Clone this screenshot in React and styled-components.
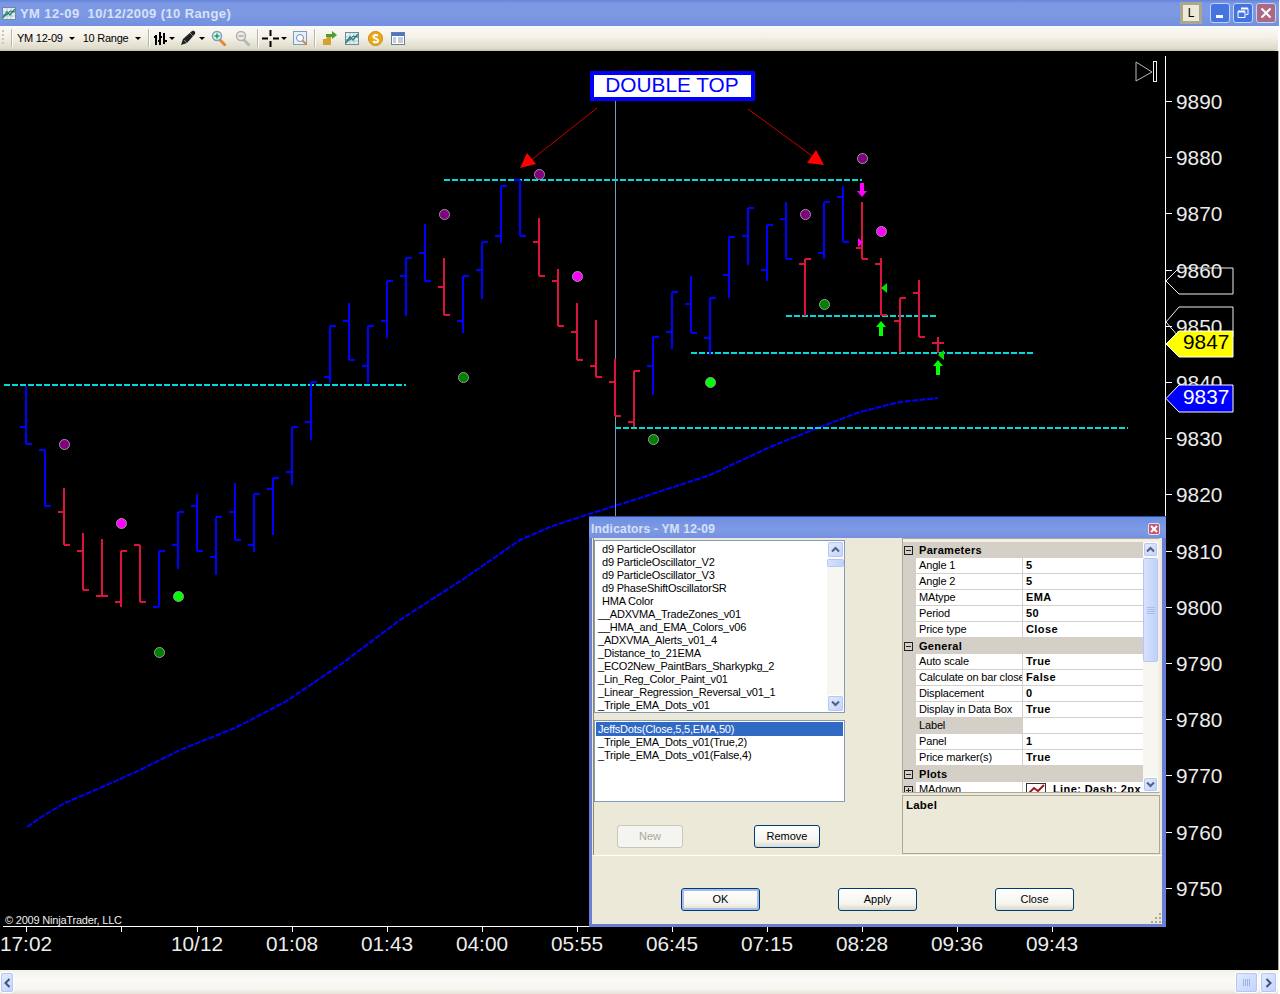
import React from 'react';
import styled, { createGlobalStyle } from 'styled-components';

const GlobalStyle = createGlobalStyle`
    html, body {
        margin: 0;
        padding: 0;
        background: #fff;
        overflow: hidden;
    }
    * { box-sizing: border-box; }
`

const UI_FONT = `"Liberation Sans", Arial, sans-serif`

const Window = styled.div`
    width: 1280px;
    height: 994px;
    display: flex;
    flex-direction: column;
    position: relative;
    font-family: ${UI_FONT};
    font-size: 11px;
    color: #000;
    background: #fff;
    overflow: hidden;
`
const TitleBar = styled.div`
    height: 26px;
    width: 1279px;
    display: flex;
    align-items: center;
    padding-left: 2px;
    background: linear-gradient(180deg, #6484dc 0, #7c98e2 12%, #7d99e3 55%, #7390e0 100%);
`
const TitleText = styled.div`
    flex: 1;
    margin-left: 4px;
    font-size: 13px;
    font-weight: bold;
    letter-spacing: 0.4px;
    white-space: pre;
    color: #d6e2f8;
`
const LockButton = styled.div`
    width: 22px;
    height: 22px;
    margin-right: 8px;
    display: flex;
    align-items: center;
    justify-content: center;
    font-size: 12px;
    background: #ece9d8;
    border: 3px solid #aaa690;
`
const CaptionButton = styled.div`
    width: 20px;
    height: 20px;
    margin-right: 3px;
    display: flex;
    align-items: center;
    justify-content: center;
    border: 1px solid #c3d2f6;
    border-radius: 3px;
    background: ${p => (p.$close ? '#aa6a84' : '#4474e0')};
`
const Toolbar = styled.div`
    height: 25px;
    width: 1278px;
    display: flex;
    align-items: center;
    padding-bottom: 1px;
    background: linear-gradient(180deg, #fbfaf6 0, #f3f1e8 45%, #dedbc9 90%, #c4c3a8 100%);
    border-bottom-right-radius: 3px;
`
const Grip = styled.div`
    width: 2px;
    height: 16px;
    margin-left: 2px;
    background: repeating-linear-gradient(180deg, #c9c7b8 0 2px, transparent 2px 4px);
`
const Separator = styled.div`
    width: 2px;
    height: 18px;
    margin-left: ${p => p.$gap}px;
    border-left: 1px solid #b9b6a6;
    border-right: 1px solid #fff;
`
const ToolLabel = styled.span`
    margin-left: ${p => p.$gap}px;
    white-space: nowrap;
    font-size: 11px;
    letter-spacing: -0.25px;
`
const Caret = styled.span`
    margin-left: ${p => p.$gap}px;
    width: 0;
    height: 0;
    border-left: 3px solid transparent;
    border-right: 3px solid transparent;
    border-top: 3px solid #000;
`
const ToolIcon = styled.svg`
    display: block;
    flex: none;
    margin-left: ${p => p.$gap}px;
`
const ChartPane = styled.div`
    height: 919px;
    display: flex;
    background: #000;
    border-right: 1px solid #aca899;
    width: 1279px;
`
const ChartSvg = styled.svg`
    display: block;
    flex: none;
`
const AxisText = styled.text`
    font-family: ${UI_FONT};
    font-size: 20.8px;
    fill: ${p => p.$fill || '#ececec'};
`
const SmallText = styled.text`
    font-family: ${UI_FONT};
    font-size: 11px;
    letter-spacing: -0.2px;
    fill: #eee;
`
const BottomBar = styled.div`
    height: 24px;
    width: 1278px;
    padding: 2px 1px 1px 0;
    display: flex;
    justify-content: space-between;
    background: linear-gradient(180deg, #f3f1ea 0, #fbfaf7 40%, #f6f5ef 80%, #e4e2d8 100%);
`
const HBarGroup = styled.div`
    display: flex;
    gap: 2px;
`
const XpButton = styled.div`
    width: ${p => p.$w}px;
    height: ${p => p.$h}px;
    flex: none;
    display: flex;
    align-items: center;
    justify-content: center;
    background: linear-gradient(135deg, #e3ebfe, #c2d2fc);
    border: 1px solid #fff;
    outline: 1px solid #b5c7f2;
    outline-offset: -2px;
    border-radius: 3px;
`

/* indicators dialog */
const Dialog = styled.div`
    position: absolute;
    left: 589px;
    top: 516px;
    width: 577px;
    height: 411px;
    display: flex;
    flex-direction: column;
    background: #6a7ed8;
    padding: 0 4px 3px 3px;
    border-top: 1px solid #2f4fa8;
`
const DialogTitle = styled.div`
    height: 21px;
    display: flex;
    align-items: center;
    justify-content: space-between;
    padding: 2px 3px 0 2px;
    margin: 0 -4px 0 -3px;
    background: linear-gradient(180deg, #6e8fe2 0, #7e9ae4 60%, #7590e0 100%);
    font-weight: bold;
    font-size: 12px;
    letter-spacing: 0.2px;
    color: #d5e1f8;
`
const DialogClose = styled.div`
    width: 12px;
    height: 12px;
    margin-right: 3px;
    display: flex;
    align-items: center;
    justify-content: center;
    background: #c05a70;
    border: 1px solid #e8e0f0;
    border-radius: 2px;
`
const DialogBody = styled.div`
    flex: 1;
    display: flex;
    flex-direction: column;
    background: #ece9d8;
`
const TopSection = styled.div`
    height: 318px;
    display: flex;
    border-bottom: 1px solid #fff;
`
const LeftPane = styled.div`
    width: 309px;
    margin-left: 1px;
    padding-top: 2px;
    display: flex;
    flex-direction: column;
    border-left: 1px solid #8d8a78;
`
const ListBox = styled.div`
    width: 251px;
    height: ${p => p.$h}px;
    margin-bottom: ${p => p.$mb}px;
    display: flex;
    background: #fff;
    border: 1px solid #7f9db9;
`
const ListRows = styled.div`
    flex: 1;
    padding: ${p => (p.$pad ? '1px' : '2px 0 0')};
    overflow: hidden;
`
const ListRow = styled.div`
    height: ${p => (p.$selected ? 14 : 13)}px;
    line-height: ${p => (p.$selected ? 15 : 13)}px;
    padding-left: ${p => p.$indent}px;
    white-space: nowrap;
    letter-spacing: -0.2px;
    background: ${p => (p.$selected ? '#316ac5' : 'transparent')};
    color: ${p => (p.$selected ? '#fff' : '#000')};
`
const VScroll = styled.div`
    width: ${p => p.$w}px;
    flex: none;
    display: flex;
    flex-direction: column;
    justify-content: space-between;
    background: #f7f6f1;
`
const ScrollStart = styled.div`
    display: flex;
    flex-direction: column;
    gap: 1px;
`
const ScrollThumb = styled.div`
    height: ${p => p.$h}px;
    background: linear-gradient(90deg, #d6e2fc, #c0d2fa);
    border: 1px solid #fff;
    outline: 1px solid #b5c7f2;
    outline-offset: -1px;
    border-radius: 2px;
    display: flex;
    align-items: center;
    justify-content: center;
`
const ButtonRow = styled.div`
    display: flex;
    gap: 71px;
    padding-left: 23px;
`
const DialogButton = styled.div`
    width: ${p => p.$w || 66}px;
    height: 23px;
    padding-bottom: 2px;
    display: flex;
    align-items: center;
    justify-content: center;
    border-radius: 3px;
    border: 1px solid ${p => (p.$disabled ? '#c9c7ba' : '#003c74')};
    color: ${p => (p.$disabled ? '#aca899' : '#000')};
    background: ${p => (p.$disabled ? '#f4f4f0' : 'linear-gradient(180deg, #fff 0, #f5f4ee 70%, #dcd8cc 100%)')};
    box-shadow: ${p => (p.$default ? 'inset 0 0 0 2px #a4bdec' : 'none')};
`
const RightPane = styled.div`
    width: 258px;
    display: flex;
    flex-direction: column;
`
const PropertyGrid = styled.div`
    height: 255px;
    display: flex;
    padding-top: 3px;
    border-top: 1px solid #aca899;
    border-left: 1px solid #aca899;
    border-right: 1px solid #f1efe4;
    border-bottom: 1px solid #aca899;
    background: #f2f0e6;
    overflow: hidden;
`
const PropertyRows = styled.div`
    width: 240px;
    flex: none;
    overflow: hidden;
`
const SectionHead = styled.div`
    height: 16px;
    display: flex;
    align-items: center;
    gap: 6px;
    padding-left: 1px;
    font-weight: bold;
    letter-spacing: 0.3px;
    background: #d4d0c8;
`
const ExpandBox = styled.span`
    width: 9px;
    height: 9px;
    flex: none;
    position: relative;
    border: 1px solid #222;
    &::before {
        content: '';
        position: absolute;
        left: 1px;
        right: 1px;
        top: 3px;
        height: 1px;
        background: #222;
    }
    &::after {
        content: '';
        display: ${p => (p.$plus ? 'block' : 'none')};
        position: absolute;
        top: 1px;
        bottom: 1px;
        left: 3px;
        width: 1px;
        background: #222;
    }
`
const PropRow = styled.div`
    height: 16px;
    display: grid;
    grid-template-columns: 13px 107px 1fr;
    background: #fff;
`
const Gutter = styled.div`
    background: #d4d0c8;
    display: flex;
    align-items: center;
    padding-left: 1px;
`
const PropName = styled.div`
    padding-left: 3px;
    line-height: 15px;
    white-space: nowrap;
    overflow: hidden;
    letter-spacing: -0.15px;
    border-right: 1px solid #d4d0c8;
    border-bottom: 1px solid #d4d0c8;
    background: ${p => (p.$active ? '#d4d0c8' : '#fff')};
`
const PropValue = styled.div`
    padding-left: 3px;
    line-height: 15px;
    font-weight: bold;
    letter-spacing: 0.4px;
    white-space: nowrap;
    overflow: hidden;
    display: flex;
    align-items: center;
    gap: 7px;
    border-bottom: 1px solid #d4d0c8;
`
const HelpPanel = styled.div`
    margin-top: 2px;
    height: 59px;
    padding: 3px 3px;
    font-weight: bold;
    font-size: 11.5px;
    letter-spacing: 0.2px;
    border: 1px solid #aca899;
`
const BottomSection = styled.div`
    flex: 1;
    position: relative;
    display: flex;
    gap: 78px;
    padding: 32px 0 0 89px;
`
const ResizeGrip = styled.svg`
    position: absolute;
    right: 0;
    bottom: 0;
`

const B = '#0000ff'
const R = '#dc143c'

// x, high, low, open, close, colour (all in page pixels)
const BARS = [
    [26, 386, 444, 427, 444, B], [45, 450, 506, 450, 506, B], [64, 488, 545, 512, 545, R],
    [83, 533, 590, 551, 590, R], [102, 539, 596, 596, 596, R], [121, 551, 607, 602, 551, R],
    [140, 545, 602, 545, 602, R], [159, 551, 607, 607, 551, B], [178, 512, 569, 545, 512, B],
    [197, 494, 551, 506, 551, B], [216, 517, 575, 557, 517, B], [235, 483, 540, 512, 540, B],
    [254, 494, 552, 545, 494, B], [273, 478, 535, 489, 478, B], [292, 427, 485, 472, 427, B],
    [311, 382, 440, 422, 382, B], [330, 326, 383, 377, 326, B], [349, 303, 360, 321, 360, B],
    [368, 326, 383, 366, 326, B], [387, 281, 338, 321, 281, B], [406, 258, 316, 276, 258, B],
    [425, 224, 281, 253, 281, B], [444, 258, 315, 287, 315, R], [463, 276, 333, 321, 276, B],
    [482, 242, 299, 270, 242, B], [501, 186, 243, 236, 186, B], [520, 180, 236, 180, 236, B],
    [539, 218, 276, 242, 276, R], [558, 269, 326, 281, 326, R], [577, 303, 360, 332, 360, R],
    [596, 320, 377, 366, 377, R], [615, 359, 416, 382, 416, R], [634, 371, 427, 422, 371, R],
    [653, 337, 395, 366, 337, B], [672, 292, 349, 332, 292, B], [691, 276, 333, 304, 333, B],
    [710, 298, 355, 338, 298, B], [729, 237, 298, 275, 237, B], [748, 208, 265, 236, 208, B],
    [767, 225, 281, 270, 225, B], [786, 202, 259, 219, 259, B], [805, 259, 316, 264, 259, R],
    [824, 202, 259, 253, 202, B], [843, 186, 242, 197, 242, B], [862, 202, 259, 248, 259, R],
    [881, 258, 315, 264, 315, R], [900, 298, 353, 321, 298, R], [919, 280, 337, 293, 337, R],
    [938, 337, 353, 343, 343, R],
]

const DOTS = [
    [64, 444, '#800080'], [444, 214, '#800080'], [539, 174, '#800080'], [805, 214, '#800080'], [862, 158, '#800080'],
    [121, 523, '#ff00ff'], [577, 276, '#ff00ff'], [881, 231, '#ff00ff'],
    [178, 596, '#00ff00'], [710, 382, '#00ff00'],
    [159, 652, '#008000'], [463, 377, '#008000'], [653, 439, '#008000'], [824, 304, '#008000'],
]

const LEVELS = [[4, 406, 385], [444, 862, 180], [786, 937, 316], [691, 1034, 353], [615, 1128, 428]]

const EMA = '27,827 46,814 65,803 100,788 140,770 180,750 235,728 285,702 340,665 400,620 465,578 520,540 550,527 580,517 640,498 710,475 770,447 820,427 860,412 900,402 938,398'

const PRICES = [
    [9890, 101], [9880, 157], [9870, 213], [9860, 270], [9850, 326], [9840, 382], [9830, 438], [9820, 494],
    [9810, 551], [9800, 607], [9790, 663], [9780, 719], [9770, 775], [9760, 832], [9750, 888],
]

const TIMES = [
    [26, '17:02'], [121, ''], [197, '10/12'], [292, '01:08'], [387, '01:43'], [482, '04:00'], [577, '05:55'],
    [672, '06:45'], [767, '07:15'], [862, '08:28'], [957, '09:36'], [1052, '09:43'],
]

const tag = (top, bottom) => {
    const mid = (top + bottom) / 2
    return `M1233 ${top} H1179 L1166 ${mid} L1179 ${bottom} H1233 Z`
}

const Bar = ({ bar }) => {
    const [x, high, low, open, close, color] = bar
    return (
        <g stroke={color} strokeWidth="2" shapeRendering="crispEdges">
            <line x1={x} x2={x} y1={high} y2={low} />
            <line x1={x - 6} x2={x} y1={open} y2={open} />
            <line x1={x} x2={x + 6} y1={close} y2={close} />
        </g>
    )
}

const Chart = () => (
    <ChartSvg width="1278" height="919" viewBox="0 51 1278 919">
        <line x1="615.5" x2="615.5" y1="100" y2="520" stroke="#7d97b8" shapeRendering="crispEdges" />
        <polyline points={EMA} fill="none" stroke="#0000ff" strokeWidth="2" strokeDasharray="6 1.5" />
        {LEVELS.map(([x1, x2, y]) => (
            <line key={y} x1={x1} x2={x2} y1={y} y2={y} stroke="#00dcdc" strokeWidth="2" strokeDasharray="6 2" shapeRendering="crispEdges" />
        ))}
        {BARS.map(b => <Bar key={b[0]} bar={b} />)}
        {DOTS.map(([x, y, c]) => <circle key={`${x}-${y}`} cx={x + 0.5} cy={y + 0.5} r="5" fill={c} stroke="#999" />)}

        <path d="M860 183h4v8h3l-5 6-5-6h3z" fill="#ff00ff" />
        <path d="M879 336v-9h-3l5-6 5 6h-3v9z" fill="#00ff00" />
        <path d="M936 375v-9h-3l5-6 5 6h-3v9z" fill="#00ff00" />
        <path d="M858 238l5 4.500-5 4.500z" fill="#ff00ff" />
        <path d="M887 283v10l-6-5z" fill="#00e000" />
        <path d="M944 350v10l-6-5z" fill="#00e000" />

        <line x1="597" y1="108" x2="530" y2="161" stroke="#c80000" />
        <path d="M520 168L527 153L536 164z" fill="#ff0000" />
        <line x1="748" y1="109" x2="815" y2="158" stroke="#c80000" />
        <path d="M824 165L807 163L816 150z" fill="#ff0000" />
        <rect x="592" y="73" width="161" height="26" fill="#fff" stroke="#0000ff" strokeWidth="4" />
        <AxisText x="672" y="92" textAnchor="middle" $fill="#0000ff">DOUBLE TOP</AxisText>

        <path d="M1136 62L1152 72L1136 81z" fill="none" stroke="#bbb" />
        <rect x="1153.500" y="61.500" width="3" height="20" fill="none" stroke="#eee" />

        <line x1="1165.500" x2="1165.500" y1="56" y2="926" stroke="#fff" shapeRendering="crispEdges" />
        <line x1="3" x2="1165" y1="926.500" y2="926.500" stroke="#fff" shapeRendering="crispEdges" />
        {PRICES.map(([p, y]) => (
            <g key={p}>
                <line x1="1166" x2="1172" y1={y + 0.5} y2={y + 0.5} stroke="#fff" shapeRendering="crispEdges" />
                <AxisText x="1176" y={y + 7.5}>{p}</AxisText>
            </g>
        ))}
        {TIMES.map(([x, t]) => (
            <g key={x}>
                <line x1={x + 0.5} x2={x + 0.5} y1="926" y2="932" stroke="#fff" shapeRendering="crispEdges" />
                <AxisText x={x} y="951" textAnchor="middle">{t}</AxisText>
            </g>
        ))}
        <SmallText x="5" y="924">© 2009 NinjaTrader, LLC</SmallText>

        <path d={tag(268, 294)} fill="none" stroke="#eee" />
        <path d={tag(307, 337)} fill="none" stroke="#eee" />
        <path d={tag(331, 357)} fill="#ffff00" stroke="#fff" />
        <AxisText x="1183" y="349" $fill="#000">9847</AxisText>
        <path d={tag(385, 412)} fill="#0000ff" stroke="#fff" />
        <AxisText x="1183" y="404" $fill="#fff">9837</AxisText>
    </ChartSvg>
)

const ChartGlyph = ({ gap }) => (
    <ToolIcon $gap={gap} width="14" height="13" viewBox="0 0 14 13">
        <rect x="0.500" y="0.500" width="13" height="12" fill="#e8eef6" stroke="#6a8aa8" />
        <path d="M1 5h12M1 9h12M5 1v11M9 1v11" stroke="#b8c8d8" />
        <path d="M1 11L5 5l3 3 5-6" fill="none" stroke="#1c9c3c" strokeWidth="1.500" />
        <path d="M1 8L5 8l3-4 5 1" fill="none" stroke="#2c5cc8" />
    </ToolIcon>
)

const ZoomGlyph = ({ gap, muted, plus }) => (
    <ToolIcon $gap={gap} width="15" height="16" viewBox="0 0 15 16">
        <path d="M9 10l5 5" stroke={muted ? '#b8b8b4' : '#e08838'} strokeWidth="3" strokeLinecap="round" />
        <circle cx="6" cy="6" r="4.500" fill={muted ? '#ecece8' : '#dceef8'} stroke={muted ? '#b0b0ac' : '#7aa0b8'} strokeWidth="1.500" />
        <path d="M3.500 6h5" stroke={muted ? '#a8a8a4' : '#20a040'} strokeWidth="1.500" />
        {plus && <path d="M6 3.500v5" stroke="#20a040" strokeWidth="1.500" />}
    </ToolIcon>
)

const Chevron = ({ down, dark }) => (
    <svg width="9" height="7" viewBox="0 0 9 7">
        <path d={down ? 'M1 1.500L4.500 5L8 1.500' : 'M1 5.500L4.500 2L8 5.500'} fill="none" stroke={dark || '#4d6185'} strokeWidth="2" />
    </svg>
)

const HChevron = ({ right }) => (
    <svg width="7" height="10" viewBox="0 0 7 10">
        <path d={right ? 'M1.500 1L5.500 5L1.500 9' : 'M5.500 1L1.500 5L5.500 9'} fill="none" stroke="#3f5278" strokeWidth="2" />
    </svg>
)

const ListScroll = ({ thumb, w }) => (
    <VScroll $w={w}>
        <ScrollStart>
            <XpButton $w={w} $h={w}><Chevron /></XpButton>
            <ScrollThumb $h={thumb}>
                {thumb > 40 && (
                    <svg width="8" height="7" viewBox="0 0 8 7">
                        <path d="M0 .5h8M0 2.500h8M0 4.500h8M0 6.500h8" stroke="#a8bcf0" />
                    </svg>
                )}
            </ScrollThumb>
        </ScrollStart>
        <XpButton $w={w} $h={w}><Chevron down /></XpButton>
    </VScroll>
)

const AVAILABLE = [
    ['d9 ParticleOscillator', 8], ['d9 ParticleOscillator_V2', 8], ['d9 ParticleOscillator_V3', 8],
    ['d9 PhaseShiftOscillatorSR', 8], ['HMA Color', 8], ['__ADXVMA_TradeZones_v01', 4],
    ['__HMA_and_EMA_Colors_v06', 4], ['_ADXVMA_Alerts_v01_4', 4], ['_Distance_to_21EMA', 4],
    ['_ECO2New_PaintBars_Sharkypkg_2', 4], ['_Lin_Reg_Color_Paint_v01', 4],
    ['_Linear_Regression_Reversal_v01_1', 4], ['_Triple_EMA_Dots_v01', 4],
]

const APPLIED = ['JeffsDots(Close,5,5,EMA,50)', '_Triple_EMA_Dots_v01(True,2)', '_Triple_EMA_Dots_v01(False,4)']

const SECTIONS = [
    ['Parameters', [['Angle 1', '5'], ['Angle 2', '5'], ['MAtype', 'EMA'], ['Period', '50'], ['Price type', 'Close']]],
    ['General', [
        ['Auto scale', 'True'], ['Calculate on bar close', 'False'], ['Displacement', '0'],
        ['Display in Data Box', 'True'], ['Label', ''], ['Panel', '1'], ['Price marker(s)', 'True'],
    ]],
]

const IndicatorsDialog = () => (
    <Dialog>
        <DialogTitle>
            Indicators - YM 12-09
            <DialogClose>
                <svg width="8" height="8" viewBox="0 0 8 8">
                    <path d="M1 1l6 6M7 1L1 7" stroke="#fff" strokeWidth="2" />
                </svg>
            </DialogClose>
        </DialogTitle>
        <DialogBody>
            <TopSection>
                <LeftPane>
                    <ListBox $h={173} $mb={7}>
                        <ListRows>
                            {AVAILABLE.map(([name, indent]) => (
                                <ListRow key={name} $indent={indent - 1}>{name}</ListRow>
                            ))}
                        </ListRows>
                        <ListScroll thumb={8} w={17} />
                    </ListBox>
                    <ListBox $h={82} $mb={23}>
                        <ListRows $pad>
                            {APPLIED.map((name, i) => (
                                <ListRow key={name} $indent={2} $selected={i === 0}>{name}</ListRow>
                            ))}
                        </ListRows>
                    </ListBox>
                    <ButtonRow>
                        <DialogButton $disabled>New</DialogButton>
                        <DialogButton>Remove</DialogButton>
                    </ButtonRow>
                </LeftPane>
                <RightPane>
                    <PropertyGrid>
                        <PropertyRows>
                            {SECTIONS.map(([title, rows]) => (
                                <div key={title}>
                                    <SectionHead><ExpandBox />{title}</SectionHead>
                                    {rows.map(([name, value]) => (
                                        <PropRow key={name}>
                                            <Gutter />
                                            <PropName $active={name === 'Label'}>{name}</PropName>
                                            <PropValue>{value}</PropValue>
                                        </PropRow>
                                    ))}
                                </div>
                            ))}
                            <SectionHead><ExpandBox />Plots</SectionHead>
                            <PropRow>
                                <Gutter><ExpandBox $plus /></Gutter>
                                <PropName>MAdown</PropName>
                                <PropValue>
                                    <svg width="20" height="14" viewBox="0 0 20 14">
                                        <rect x="0.500" y="0.500" width="19" height="13" fill="#fff" stroke="#333" />
                                        <path d="M2 11L8 5l4 3 6-6" fill="none" stroke="#a01820" strokeWidth="2" />
                                    </svg>
                                    Line; Dash; 2px
                                </PropValue>
                            </PropRow>
                        </PropertyRows>
                        <ListScroll thumb={104} w={15} />
                    </PropertyGrid>
                    <HelpPanel>Label</HelpPanel>
                </RightPane>
            </TopSection>
            <BottomSection>
                <DialogButton $w={79} $default>OK</DialogButton>
                <DialogButton $w={79}>Apply</DialogButton>
                <DialogButton $w={79}>Close</DialogButton>
                <ResizeGrip width="12" height="12" viewBox="0 0 12 12">
                    <path d="M9 1h2v2H9zM5 5h2v2H5zM9 5h2v2H9zM1 9h2v2H1zM5 9h2v2H5zM9 9h2v2H9z" fill="#aca899" />
                </ResizeGrip>
            </BottomSection>
        </DialogBody>
    </Dialog>
)

const App = () => (
    <Window>
        <GlobalStyle />
        <TitleBar>
            <ChartGlyph gap={0} />
            <TitleText>YM 12-09  10/12/2009 (10 Range)</TitleText>
            <LockButton>L</LockButton>
            <CaptionButton>
                <svg width="10" height="10" viewBox="0 0 10 10"><rect x="1" y="7" width="7" height="3" fill="#fff" /></svg>
            </CaptionButton>
            <CaptionButton>
                <svg width="12" height="12" viewBox="0 0 12 12">
                    <path d="M4 1.500h7v6H9M1 4.500h7v6H1z" fill="none" stroke="#fff" />
                    <path d="M4 1.500h7M1 4.500h7" stroke="#fff" strokeWidth="2" />
                </svg>
            </CaptionButton>
            <CaptionButton $close>
                <svg width="12" height="12" viewBox="0 0 12 12"><path d="M1.500 1.500l9 9M10.500 1.500l-9 9" stroke="#fff" strokeWidth="2" /></svg>
            </CaptionButton>
        </TitleBar>
        <Toolbar>
            <Grip />
            <Separator $gap={7} />
            <ToolLabel $gap={4}>YM 12-09</ToolLabel>
            <Caret $gap={6} />
            <ToolLabel $gap={8}>10 Range</ToolLabel>
            <Caret $gap={7} />
            <Separator $gap={7} />
            <ToolIcon $gap={4} width="13" height="15" viewBox="0 0 13 15">
                <path d="M2 4v10M6 1v13M10 2v11M0 6h2M6 10h-2M6 6h2M10 10h3" stroke="#000" strokeWidth="2" />
            </ToolIcon>
            <Caret $gap={2} />
            <ToolIcon $gap={5} width="17" height="16" viewBox="0 0 17 16">
                <path d="M1 15l2-6L12 1c2-1 4 1 3 3l-8 9z" fill="#222" />
                <path d="M4 10l3 3M10 3l3 3" stroke="#888" />
            </ToolIcon>
            <Caret $gap={2} />
            <ZoomGlyph gap={6} plus />
            <ZoomGlyph gap={9} muted />
            <Separator $gap={7} />
            <ToolIcon $gap={3} width="17" height="17" viewBox="0 0 17 17">
                <path d="M8.500 0v6M8.500 11v6M0 8.500h6M11 8.500h6" stroke="#000" strokeWidth="2" />
            </ToolIcon>
            <Caret $gap={2} />
            <ToolIcon $gap={6} width="15" height="15" viewBox="0 0 15 15">
                <rect x="0.500" y="0.500" width="13" height="13" fill="#e8f0fa" stroke="#7c9cc0" />
                <circle cx="7" cy="7" r="3.500" fill="#fff" stroke="#6890b8" />
                <path d="M9.500 9.500l4 4" stroke="#d88838" strokeWidth="2" />
            </ToolIcon>
            <Separator $gap={6} />
            <ToolIcon $gap={6} width="15" height="15" viewBox="0 0 15 15">
                <path d="M1 14V8h3l1-2h4v8z" fill="#d8a030" />
                <path d="M4 6V3h6V0l5 4-5 4V6z" fill="#48a030" />
            </ToolIcon>
            <ChartGlyph gap={8} />
            <ToolIcon $gap={9} width="15" height="15" viewBox="0 0 15 15">
                <circle cx="7.500" cy="7.500" r="7" fill="#eca818" stroke="#d08808" />
                <path d="M10 4.500C8 3.500 5 4 5.500 6s4.500 1 4.500 3.500S7 11.500 5 10.500" fill="none" stroke="#fff" strokeWidth="2" />
            </ToolIcon>
            <ToolIcon $gap={8} width="14" height="13" viewBox="0 0 14 13">
                <rect x="0.500" y="0.500" width="13" height="12" fill="#fff" stroke="#6a7ea0" />
                <rect x="1" y="1" width="12" height="3" fill="#4c74c8" />
                <path d="M2 6h3M2 8h3M2 10h3M7 6h5M7 8h5M7 10h5" stroke="#8898b4" />
            </ToolIcon>
        </Toolbar>
        <ChartPane>
            <Chart />
        </ChartPane>
        <BottomBar>
            <XpButton $w={14} $h={21}><HChevron /></XpButton>
            <HBarGroup>
                <XpButton $w={23} $h={21}>
                    <svg width="8" height="7" viewBox="0 0 8 7">
                        <path d="M.5 0v7M2.500 0v7M4.500 0v7M6.500 0v7" stroke="#98b0e8" />
                    </svg>
                </XpButton>
                <XpButton $w={17} $h={21}><HChevron right /></XpButton>
            </HBarGroup>
        </BottomBar>
        <IndicatorsDialog />
    </Window>
)

export default App
